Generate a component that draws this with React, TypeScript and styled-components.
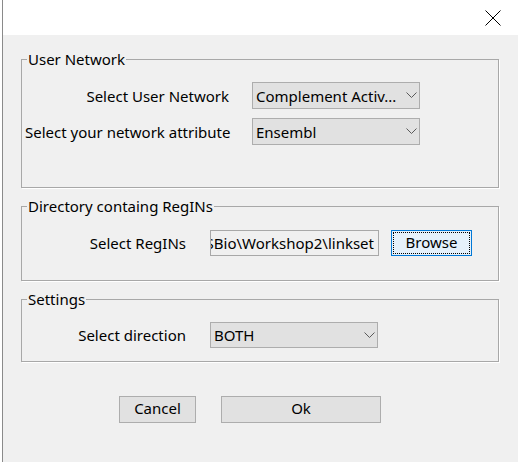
import React from "react";
import styled, { createGlobalStyle } from "styled-components";

const GlobalStyle = createGlobalStyle`
  html, body { margin: 0; padding: 0; background: #fff; }
  body {
    font-family: "Noto Sans", "Open Sans", sans-serif;
    font-size: 15px;
    color: #000;
  }
  * { box-sizing: border-box; }
`;

const Screen = styled.div`
  display: flex;
  width: 518px;
  height: 462px;
  padding-left: 2px;
  background: #fff;
  overflow: hidden;
`;

const Window = styled.div`
  flex: 1;
  display: flex;
  flex-direction: column;
  border-left: 1px solid #8a8a8a;
`;

const TitleBar = styled.div`
  flex: none;
  height: 35px;
  background: #fff;
  display: flex;
  align-items: center;
  justify-content: flex-end;
  padding-right: 17px;
`;

const Content = styled.div`
  flex: 1;
  background: #f0f0f0;
  padding: 15px 19px 0 18px;
  display: flex;
  flex-direction: column;
  gap: 9px;
`;

const GroupBox = styled.fieldset`
  margin: 0;
  padding: 0;
  min-width: 0;
  border: 1px solid #a8a8a8;
  box-shadow: 1px 1px 0 #fff;
`;

const Legend = styled.legend`
  margin-left: 5px;
  padding: 0 1px;
  line-height: 18px;
  font-size: 15px;
`;

const Stack = styled.div<{ $pt: number; $pb: number; $pl: number }>`
  display: flex;
  flex-direction: column;
  gap: 9px;
  padding: ${(p) => p.$pt}px 0 ${(p) => p.$pb}px ${(p) => p.$pl}px;
`;

const Row = styled.div`
  display: flex;
  align-items: center;
`;

const Label = styled.div<{ $w: number; $gap: number }>`
  width: ${(p) => p.$w}px;
  margin-right: ${(p) => p.$gap}px;
  text-align: right;
  white-space: nowrap;
`;

const Combo = styled.div<{ $w: number; $h: number }>`
  width: ${(p) => p.$w}px;
  height: ${(p) => p.$h}px;
  border: 1px solid #adadad;
  background: #e1e1e1;
  display: flex;
  align-items: center;
  justify-content: space-between;
  padding: 0 2px 0 3px;
  white-space: nowrap;
  overflow: hidden;
`;

const ComboText = styled.span`
  overflow: hidden;
`;

const TextField = styled.div<{ $w: number }>`
  width: ${(p) => p.$w}px;
  height: 26px;
  border: 1px solid #a8a8a8;
  background: #f0f0f0;
  display: flex;
  align-items: center;
  justify-content: flex-end;
  padding: 0 4px;
  white-space: nowrap;
  overflow: hidden;
`;

const FocusButton = styled.button<{ $w: number }>`
  width: ${(p) => p.$w}px;
  height: 26px;
  margin-left: 12px;
  padding: 0 0 2px;
  font: inherit;
  color: #000;
  background: #e5f1fb;
  border: 1px solid #0078d7;
  outline: 1px dotted #000;
  outline-offset: -3px;
`;

const Footer = styled.div`
  display: flex;
  gap: 25px;
  margin-top: 25px;
  padding-left: 98px;
`;

const Button = styled.button<{ $w: number }>`
  width: ${(p) => p.$w}px;
  height: 27px;
  padding: 0 0 3px;
  font: inherit;
  color: #000;
  background: #e1e1e1;
  border: 1px solid #adadad;
`;

const Chevron = () => (
  <svg width="11" height="7" viewBox="0 0 11 7">
    <polyline points="0.5,0.5 5.5,5.5 10.5,0.5" fill="none" stroke="#5a5a5a" strokeWidth="1" />
  </svg>
);

const CloseIcon = () => (
  <svg width="16" height="16" viewBox="0 0 16 16">
    <line x1="0.5" y1="0.5" x2="15.5" y2="15.5" stroke="#000" strokeWidth="1" />
    <line x1="15.5" y1="0.5" x2="0.5" y2="15.5" stroke="#000" strokeWidth="1" />
  </svg>
);

export default function App() {
  return (
    <>
      <GlobalStyle />
      <Screen>
        <Window>
          <TitleBar>
            <CloseIcon />
          </TitleBar>
          <Content>
            <GroupBox>
              <Legend>User Network</Legend>
              <Stack $pt={14} $pb={42} $pl={3}>
                <Row>
                  <Label $w={204} $gap={23}>Select User Network</Label>
                  <Combo $w={168} $h={27}>
                    <ComboText>Complement Activ...</ComboText>
                    <Chevron />
                  </Combo>
                </Row>
                <Row>
                  <Label $w={204} $gap={23}>Select your network attribute</Label>
                  <Combo $w={168} $h={27}>
                    <ComboText>Ensembl</ComboText>
                    <Chevron />
                  </Combo>
                </Row>
              </Stack>
            </GroupBox>
            <GroupBox>
              <Legend>Directory containg RegINs</Legend>
              <Stack $pt={15} $pb={24} $pl={0}>
                <Row>
                  <Label $w={164} $gap={24}>Select RegINs</Label>
                  <TextField $w={169}>SBio\Workshop2\linkset</TextField>
                  <FocusButton $w={81}>Browse</FocusButton>
                </Row>
              </Stack>
            </GroupBox>
            <GroupBox>
              <Legend>Settings</Legend>
              <Stack $pt={14} $pb={13} $pl={0}>
                <Row>
                  <Label $w={164} $gap={24}>Select direction</Label>
                  <Combo $w={168} $h={26}>
                    <ComboText>BOTH</ComboText>
                    <Chevron />
                  </Combo>
                </Row>
              </Stack>
            </GroupBox>
            <Footer>
              <Button $w={77}>Cancel</Button>
              <Button $w={160}>Ok</Button>
            </Footer>
          </Content>
        </Window>
      </Screen>
    </>
  );
}
